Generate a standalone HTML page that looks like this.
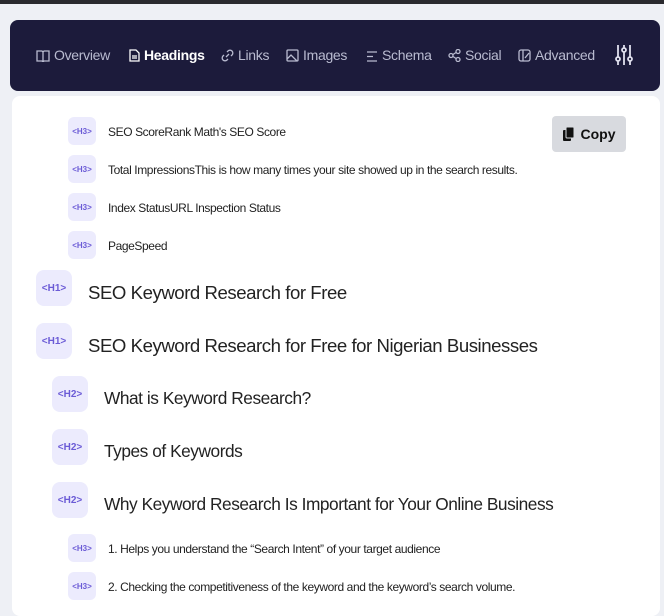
<!DOCTYPE html>
<html><head><meta charset="utf-8"><style>
*{margin:0;padding:0;box-sizing:border-box}
body{width:664px;height:598px;overflow:hidden;background:#eef0f5;font-family:"Liberation Sans",sans-serif;position:relative}
.top{position:absolute;left:0;top:0;width:664px;height:4px;background:#2a2a2e}
.nav{position:absolute;left:10px;top:20px;width:650px;height:71px;background:#1c1b3b;border-radius:8px;color:#b9bbd0;font-size:14px;letter-spacing:-0.3px}
.nav span{position:absolute;top:27px;white-space:nowrap}
.nav svg{vertical-align:-2px;margin-right:4px}
.panel{position:absolute;left:12px;top:96px;width:648px;height:520px;background:#fff;border-radius:8px}
.b{position:absolute;background:#ecebfd;color:#6b5bd6;font-weight:bold;display:flex;align-items:center;justify-content:center;border-radius:6px}
.b3{width:28px;height:28px;font-size:8px}
.b1{width:36px;height:36px;font-size:10px;border-radius:8px}
.t{position:absolute;color:#222;white-space:nowrap;letter-spacing:-0.4px}
.t3{font-size:12px}
.t1{font-size:18.6px;letter-spacing:-0.45px}
.copy{position:absolute;left:552px;top:116px;width:74px;height:36px;background:#d8dadf;border-radius:4px;font-weight:bold;font-size:14px;color:#111;display:flex;align-items:center;justify-content:center;gap:6px}
</style></head><body>
<div class="top"></div>
<div class="nav">
<span style="left:26px"><svg width="14" height="12" viewBox="0 0 14 12" fill="none" stroke="#b9bbd0" stroke-width="1.3"><path d="M1 1h5l1 1 1-1h5v10H8l-1 1-1-1H1z M7 2v9"/></svg>Overview</span>
<span style="left:119px;color:#fff;font-weight:bold"><svg width="11" height="13" viewBox="0 0 11 13" fill="none" stroke="#fff" stroke-width="1.3"><path d="M1 1h6l3 3v8H1z M3 7h5 M3 9h5"/></svg>Headings</span>
<span style="left:211px"><svg width="13" height="13" viewBox="0 0 13 13" fill="none" stroke="#b9bbd0" stroke-width="1.3"><path d="M5 8l3-3 M6 3l1-1a2.5 2.5 0 014 4l-1 1 M7 10l-1 1a2.5 2.5 0 01-4-4l1-1"/></svg>Links</span>
<span style="left:276px"><svg width="13" height="13" viewBox="0 0 13 13" fill="none" stroke="#b9bbd0" stroke-width="1.3"><rect x="1" y="1" width="11" height="11" rx="1"/><path d="M1 10l4-4 6 6 M8 5h.1"/></svg>Images</span>
<span style="left:356px"><svg width="12" height="11" viewBox="0 0 12 11" fill="none" stroke="#b9bbd0" stroke-width="1.3"><path d="M1 1h10 M1 5.5h6 M1 10h10"/></svg>Schema</span>
<span style="left:438px"><svg width="13" height="13" viewBox="0 0 13 13" fill="none" stroke="#b9bbd0" stroke-width="1.3"><circle cx="3" cy="6.5" r="2"/><circle cx="10" cy="2.5" r="2"/><circle cx="10" cy="10.5" r="2"/><path d="M5 5.5l3-2 M5 7.5l3 2"/></svg>Social</span>
<span style="left:508px"><svg width="13" height="13" viewBox="0 0 13 13" fill="none" stroke="#b9bbd0" stroke-width="1.3"><rect x="1" y="1" width="11" height="11" rx="2"/><path d="M5 1v11 M7 9l4-5"/></svg>Advanced</span>
<span style="left:605px;top:24px"><svg width="18" height="22" viewBox="0 0 18 22" fill="none" stroke="#e0e0ee" stroke-width="1.8"><path d="M3 1v12 M3 17v4 M9 1v3 M9 8v13 M15 1v12 M15 17v4"/><circle cx="3" cy="15" r="2"/><circle cx="9" cy="6" r="2"/><circle cx="15" cy="15" r="2"/></svg></span>
</div>
<div class="panel"></div>
<div class="copy"><svg width="12" height="14" viewBox="0 0 12 14"><rect x="0" y="3" width="8" height="11" rx="1" fill="#111"/><rect x="3" y="0" width="8" height="11" rx="1" fill="#111" stroke="#d8dadf" stroke-width="1"/></svg>Copy</div>

<div class="b b3" style="left:68px;top:117px">&lt;H3&gt;</div><div class="t t3" style="left:108px;top:125px">SEO ScoreRank Math's SEO Score</div>
<div class="b b3" style="left:68px;top:155px">&lt;H3&gt;</div><div class="t t3" style="left:108px;top:163px">Total ImpressionsThis is how many times your site showed up in the search results.</div>
<div class="b b3" style="left:68px;top:193px">&lt;H3&gt;</div><div class="t t3" style="left:108px;top:201px">Index StatusURL Inspection Status</div>
<div class="b b3" style="left:68px;top:231px">&lt;H3&gt;</div><div class="t t3" style="left:108px;top:239px">PageSpeed</div>

<div class="b b1" style="left:36px;top:270px">&lt;H1&gt;</div><div class="t t1" style="left:88px;top:282px">SEO Keyword Research for Free</div>
<div class="b b1" style="left:36px;top:323px">&lt;H1&gt;</div><div class="t t1" style="left:88px;top:335px">SEO Keyword Research for Free for Nigerian Businesses</div>

<div class="b b1" style="left:52px;top:376px">&lt;H2&gt;</div><div class="t t1" style="left:104px;top:388px;font-size:17.3px">What is Keyword Research?</div>
<div class="b b1" style="left:52px;top:429px">&lt;H2&gt;</div><div class="t t1" style="left:104px;top:441px;font-size:17.3px">Types of Keywords</div>
<div class="b b1" style="left:52px;top:482px">&lt;H2&gt;</div><div class="t t1" style="left:104px;top:494px;font-size:17.3px">Why Keyword Research Is Important for Your Online Business</div>

<div class="b b3" style="left:68px;top:534px">&lt;H3&gt;</div><div class="t t3" style="left:108px;top:542px">1. Helps you understand the “Search Intent” of your target audience</div>
<div class="b b3" style="left:68px;top:572px">&lt;H3&gt;</div><div class="t t3" style="left:108px;top:580px">2. Checking the competitiveness of the keyword and the keyword’s search volume.</div>
</body></html>
